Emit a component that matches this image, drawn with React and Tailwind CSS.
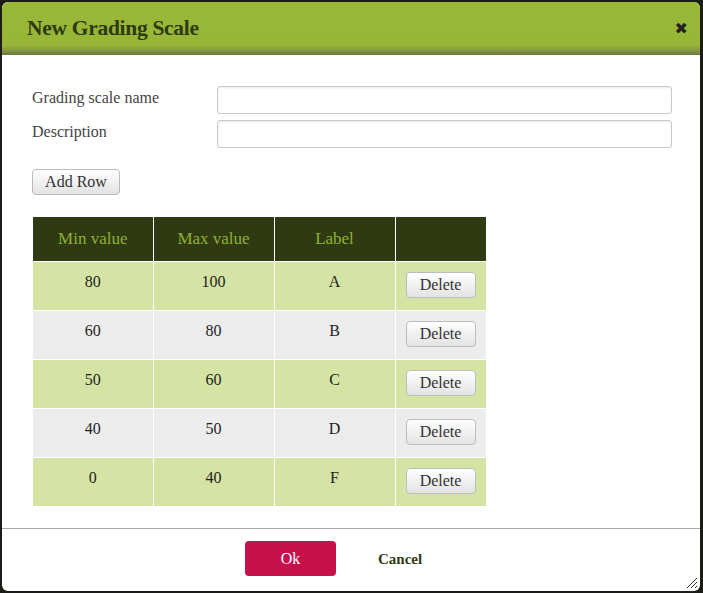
import React from "react";

const rows = [
  { min: "80", max: "100", label: "A" },
  { min: "60", max: "80", label: "B" },
  { min: "50", max: "60", label: "C" },
  { min: "40", max: "50", label: "D" },
  { min: "0", max: "40", label: "F" },
];

const serif = { fontFamily: '"Liberation Serif", "DejaVu Serif", serif' };

export default function App() {
  return (
    <div className="w-[703px] h-[593px] bg-[#1b1c18] pt-[2px] pl-[2px]" style={serif}>
      <div className="w-[698px] h-[589px] bg-white rounded-[6px] overflow-hidden flex flex-col relative">
        {/* Header */}
        <div className="h-[53px] shrink-0 flex items-center justify-between pl-[25px] pr-[12px] bg-[linear-gradient(to_bottom,#9ab838_0%,#97b536_82%,#8a9d40_90%,#6e7545_100%)]">
          <h1 className="text-[21.5px] font-bold text-[#2e3a12] tracking-[-0.3px] mb-[1px]">New Grading Scale</h1>
          <span className="text-[#222] text-[16px] font-bold leading-none" style={{ fontFamily: '"DejaVu Sans", sans-serif' }}>✖</span>
        </div>

        {/* Body */}
        <div className="flex-1 flex flex-col pl-[30px] pt-[31px]">
          <div className="flex flex-col gap-[6px]">
            <div className="flex items-start">
              <label className="w-[185px] text-[16px] text-[#444] leading-[24px]">Grading scale name</label>
              <input className="w-[455px] h-[28px] border border-[#c8c8c8] rounded-[3px] shadow-[inset_0_1px_2px_rgba(0,0,0,0.08)] outline-none" />
            </div>
            <div className="flex items-start">
              <label className="w-[185px] text-[16px] text-[#444] leading-[24px]">Description</label>
              <input className="w-[455px] h-[28px] border border-[#c8c8c8] rounded-[3px] shadow-[inset_0_1px_2px_rgba(0,0,0,0.08)] outline-none" />
            </div>
          </div>

          <button className="mt-[21px] w-[88px] h-[26px] border border-[#b9b9b9] rounded-[4px] bg-[linear-gradient(to_bottom,#ffffff,#e2e2e2)] text-[16px] text-[#333] leading-none">
            Add Row
          </button>

          <table className="mt-[22px] ml-[1px] w-[453px] border-collapse text-center">
            <thead>
              <tr className="bg-[#2f3a13] h-[44px]">
                <th className="w-[120px] border-r border-white font-normal text-[17px] text-[#8fb02e]">Min value</th>
                <th className="w-[121px] border-r border-white font-normal text-[17px] text-[#8fb02e]">Max value</th>
                <th className="w-[121px] border-r border-white font-normal text-[17px] text-[#8fb02e]">Label</th>
                <th className="w-[91px]"></th>
              </tr>
            </thead>
            <tbody>
              {rows.map((r, i) => (
                <tr key={r.label} className={`h-[49px] border-t border-white ${i % 2 === 0 ? "bg-[#d5e4a5]" : "bg-[#ececec]"}`}>
                  <td className="border-r border-white text-[16px] text-[#1e1e1e] pb-[8px]">{r.min}</td>
                  <td className="border-r border-white text-[16px] text-[#1e1e1e] pb-[8px]">{r.max}</td>
                  <td className="border-r border-white text-[16px] text-[#1e1e1e] pb-[8px]">{r.label}</td>
                  <td className="pl-[10px] pb-[2px] text-left">
                    <button className="w-[70px] h-[26px] border border-[#bdbdbd] rounded-[4px] bg-[linear-gradient(to_bottom,#ffffff,#e3e3e3)] text-[16px] text-[#333] leading-none">
                      Delete
                    </button>
                  </td>
                </tr>
              ))}
            </tbody>
          </table>
        </div>

        {/* Footer */}
        <div className="h-[63px] shrink-0 border-t border-[#a8a8a8] flex items-start pt-[12px] pl-[243px]">
          <button className="w-[91px] h-[35px] rounded-[4px] bg-[#c8104c] text-white text-[16px]">Ok</button>
          <span className="ml-[42px] mt-[7px] text-[15px] font-bold text-[#2e3a12]">Cancel</span>
        </div>

        {/* Resize grip */}
        <svg className="absolute right-[2px] bottom-[2px]" width="12" height="12" viewBox="0 0 12 12">
          <path d="M11 1 L1 11 M11 5 L5 11 M11 9 L9 11" stroke="#333" strokeWidth="1" />
        </svg>
      </div>
    </div>
  );
}
